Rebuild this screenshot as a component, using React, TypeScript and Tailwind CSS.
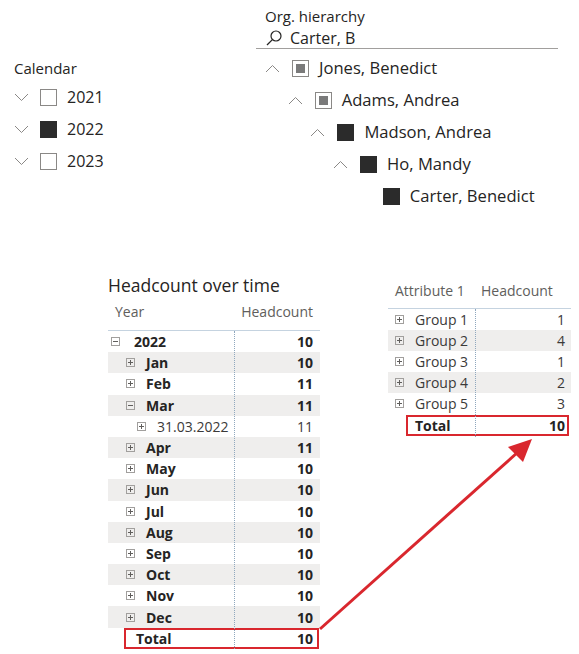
import React from "react";

const font = { fontFamily: '"Open Sans", "Noto Sans", sans-serif' };

function ChevronDown() {
  return (
    <svg width="15" height="9" viewBox="0 0 15 9" className="shrink-0">
      <polyline points="1,1 7.5,7.5 14,1" fill="none" stroke="#8a8886" strokeWidth="1" />
    </svg>
  );
}
function ChevronUp() {
  return (
    <svg width="15" height="9" viewBox="0 0 15 9" className="shrink-0">
      <polyline points="1,8 7.5,1.5 14,8" fill="none" stroke="#8a8886" strokeWidth="1" />
    </svg>
  );
}
function Box({ state }: { state: "empty" | "full" | "partial" }) {
  if (state === "full") return <div className="w-[17px] h-[17px] bg-[#2b2b2b] shrink-0" />;
  if (state === "partial")
    return (
      <div className="w-[17px] h-[17px] border border-[#8a8886] bg-white shrink-0 flex items-center justify-center">
        <div className="w-[9px] h-[9px] bg-[#7a7a7a]" />
      </div>
    );
  return <div className="w-[17px] h-[17px] border border-[#8a8886] bg-white shrink-0" />;
}
function PM({ minus }: { minus?: boolean }) {
  return (
    <svg width="9" height="9" viewBox="0 0 9 9" className="shrink-0">
      <rect x="0.5" y="0.5" width="8" height="8" fill="none" stroke="#a19f9d" strokeWidth="1" />
      <line x1="2" y1="4.5" x2="7" y2="4.5" stroke="#605e5c" strokeWidth="1" />
      {!minus && <line x1="4.5" y1="2" x2="4.5" y2="7" stroke="#605e5c" strokeWidth="1" />}
    </svg>
  );
}

const months = [
  ["Jan", "10"], ["Feb", "11"], ["Mar", "11"], ["31.03.2022", "11"], ["Apr", "11"], ["May", "10"],
  ["Jun", "10"], ["Jul", "10"], ["Aug", "10"], ["Sep", "10"], ["Oct", "10"], ["Nov", "10"], ["Dec", "10"],
];

export default function App() {
  const org: [string, "full" | "partial", number, boolean][] = [
    ["Jones, Benedict", "partial", 0, true],
    ["Adams, Andrea", "partial", 1, true],
    ["Madson, Andrea", "full", 2, true],
    ["Ho, Mandy", "full", 3, true],
    ["Carter, Benedict", "full", 4, false],
  ];
  return (
    <div className="relative w-[579px] h-[654px] bg-white overflow-hidden text-[#252423]" style={font}>
      {/* Calendar slicer */}
      <div className="absolute left-[14px] top-[57px] flex flex-col">
        <div className="text-[15px] leading-[22px] h-[22px]">Calendar</div>
        <div className="flex flex-col mt-[2px]">
          {[["2021", "empty"], ["2022", "full"], ["2023", "empty"]].map(([y, s]) => (
            <div key={y} className="h-[32px] flex items-center">
              <ChevronDown />
              <div className="ml-[11px]"><Box state={s as any} /></div>
              <span className="ml-[10px] text-[16px]">{y}</span>
            </div>
          ))}
        </div>
      </div>

      {/* Org hierarchy slicer */}
      <div className="absolute left-[256px] top-[5px] w-[302px] flex flex-col">
        <div className="text-[15px] leading-[22px] h-[22px] pl-[9px]">Org. hierarchy</div>
        <div className="h-[22px] flex items-center pl-[9px] border-b border-[#a19f9d]">
          <svg width="18" height="18" viewBox="0 0 18 18" className="shrink-0">
            <circle cx="11" cy="7" r="5" fill="none" stroke="#252423" strokeWidth="1.2" />
            <line x1="7.4" y1="10.6" x2="2" y2="16" stroke="#252423" strokeWidth="1.3" />
          </svg>
          <span className="ml-[7px] text-[16px]">Carter, B</span>
        </div>
        <div className="flex flex-col mt-[3px]">
          {org.map(([n, s, lvl, chev]) => (
            <div key={n} className="h-[32px] flex items-center" style={{ paddingLeft: 9 + lvl * 22.7 }}>
              <div className="w-[15px] shrink-0">{chev && <ChevronUp />}</div>
              <div className="ml-[12px]"><Box state={s} /></div>
              <span className="ml-[10px] text-[16.6px]">{n}</span>
            </div>
          ))}
        </div>
      </div>

      {/* Headcount over time table */}
      <div className="absolute left-[108px] top-[273px] w-[212px] flex flex-col">
        <div className="text-[17.5px] leading-[24px] h-[24px] whitespace-nowrap">Headcount over time</div>
        <div className="h-[33px] pb-[5px] flex items-center text-[14px] text-[#605e5c]">
          <span className="pl-[7px] w-[126px]">Year</span>
          <span className="flex-1 text-right pr-[7px]">Headcount</span>
        </div>
        <div className="border-t border-[#c5d3e0] relative">
          <div className="absolute left-[126px] top-0 h-[318px] border-l border-dotted border-[#8fa7bd]" />
          <div className="h-[21.2px] flex items-center text-[14px] font-bold">
            <div className="w-[126px] flex items-center pl-[3px]"><PM minus /><span className="ml-[14px]">2022</span></div>
            <span className="flex-1 text-right pr-[7px]">10</span>
          </div>
          {months.map(([m, v], i) => {
            const sub = m.startsWith("31");
            return (
              <div key={m} className={`h-[21.2px] flex items-center text-[14px] ${i % 2 === 0 ? "bg-[#efeeed]" : ""} ${sub ? "font-normal text-[#3b3a39]" : "font-bold"}`}>
                <div className={`w-[126px] flex items-center ${sub ? "pl-[29px]" : "pl-[18px]"}`}>
                  <PM minus={m === "Mar"} /><span className="ml-[11px]">{m}</span>
                </div>
                <span className="flex-1 text-right pr-[7px]">{v}</span>
              </div>
            );
          })}
          <div className="h-[21px] flex items-center text-[14px] font-bold ml-[16px] mr-[1px] border-2 border-[#d9272e]">
            <span className="w-[110px] pl-[10px]">Total</span>
            <span className="flex-1 text-right pr-[4px]">10</span>
          </div>
        </div>
      </div>

      {/* Attribute table */}
      <div className="absolute left-[388px] top-[279px] w-[183px] flex flex-col">
        <div className="h-[29px] pb-[6px] flex items-center text-[14px] text-[#605e5c]">
          <span className="pl-[7px] w-[87px]">Attribute 1</span>
          <span className="pl-[6px]">Headcount</span>
        </div>
        <div className="border-t border-[#c5d3e0] relative">
          <div className="absolute left-[87px] top-0 h-[128px] border-l border-dotted border-[#8fa7bd]" />
          {[["Group 1", "1"], ["Group 2", "4"], ["Group 3", "1"], ["Group 4", "2"], ["Group 5", "3"]].map(([g, v], i) => (
            <div key={g} className={`h-[21px] flex items-center text-[14px] text-[#3b3a39] ${i % 2 === 1 ? "bg-[#efeeed]" : ""}`}>
              <div className="w-[87px] flex items-center pl-[7px]"><PM /><span className="ml-[11px]">{g}</span></div>
              <span className="flex-1 text-right pr-[6px]">{v}</span>
            </div>
          ))}
          <div className="h-[21px] mt-[1px] flex items-center text-[14px] font-bold ml-[18px] mr-[2px] border-2 border-[#d9272e]">
            <span className="w-[69px] pl-[7px]">Total</span>
            <span className="flex-1 text-right pr-[2px]">10</span>
          </div>
        </div>
      </div>

      {/* Arrow */}
      <svg className="absolute left-0 top-0 pointer-events-none" width="579" height="654">
        <line x1="320" y1="629" x2="518" y2="452" stroke="#d9272e" strokeWidth="3" />
        <polygon points="532,439 508,447 523,462" fill="#d9272e" />
      </svg>
    </div>
  );
}
